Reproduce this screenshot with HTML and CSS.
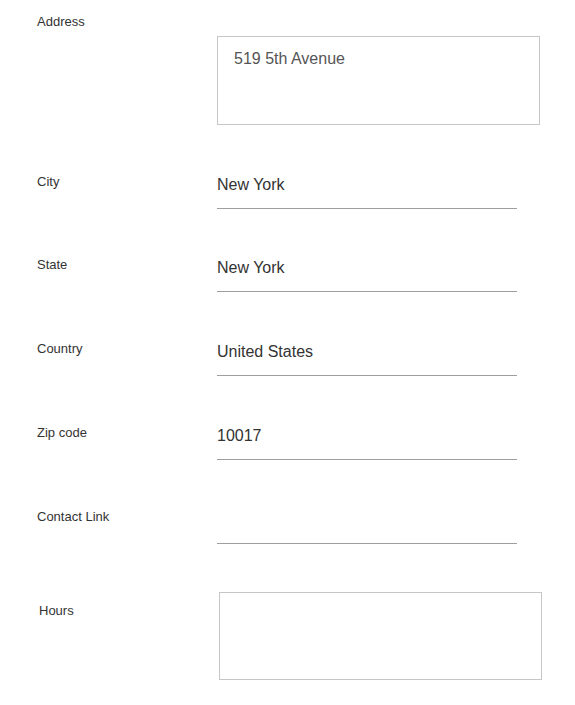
FILE: index.html
```html
<!DOCTYPE html>
<html>
<head>
<meta charset="utf-8">
<link rel="stylesheet" href="styles.css">
</head>
<body>
<form class="form">
  <div class="area-field">
    <label class="label" for="address">Address</label>
    <textarea id="address" class="area area-address">519 5th Avenue</textarea>
  </div>
  <div class="row row-first">
    <label class="label label-row" for="city">City</label>
    <input id="city" class="line-input" type="text" value="New York">
  </div>
  <div class="row row-second">
    <label class="label label-row" for="state">State</label>
    <input id="state" class="line-input" type="text" value="New York">
  </div>
  <div class="row">
    <label class="label label-row" for="country">Country</label>
    <input id="country" class="line-input" type="text" value="United States">
  </div>
  <div class="row">
    <label class="label label-row" for="zip">Zip code</label>
    <input id="zip" class="line-input" type="text" value="10017">
  </div>
  <div class="row">
    <label class="label label-row" for="contact">Contact Link</label>
    <input id="contact" class="line-input" type="text" value="">
  </div>
  <div class="row row-hours">
    <label class="label label-hours" for="hours">Hours</label>
    <textarea id="hours" class="area area-hours"></textarea>
  </div>
</form>
</body>
</html>
```

FILE: styles.css
```css
* { box-sizing: border-box; }
html, body {
  margin: 0;
  padding: 0;
  background: #ffffff;
}
body {
  font-family: "Liberation Sans", Arial, sans-serif;
  color: #333333;
}
.form {
  padding-left: 37px;
  padding-top: 14px;
}
.label {
  display: block;
  font-size: 13px;
  line-height: 15px;
  color: #333333;
}
.label-row {
  padding-top: 1px;
}
.area-field {
  display: flex;
  flex-direction: column;
}
.area {
  display: block;
  width: 323px;
  border: 1px solid #c6c6c6;
  border-radius: 0;
  resize: none;
  font-family: "Liberation Sans", Arial, sans-serif;
  font-size: 16px;
  line-height: 18px;
  color: #555555;
  outline: none;
  margin: 0;
}
.area-address {
  margin-top: 7px;
  margin-left: 180px;
  height: 89px;
  padding: 13px 16px 12px 16px;
}
.row {
  display: grid;
  grid-template-columns: 180px 300px;
  align-items: start;
  margin-top: 48px;
}
.row-second {
  margin-top: 47px;
}
.line-input {
  display: block;
  width: 300px;
  height: 36px;
  margin: 0;
  padding: 3px 0 14px 0;
  border: none;
  border-bottom: 1px solid #9e9e9e;
  border-radius: 0;
  font-family: "Liberation Sans", Arial, sans-serif;
  font-size: 16px;
  line-height: 18px;
  color: #333333;
  background: transparent;
  outline: none;
}
.row-hours {
  padding-left: 2px;
  grid-template-columns: 180px 323px;
}
.label-hours {
  padding-top: 11px;
}
.area-hours {
  height: 88px;
  padding: 12px 16px;
}
```
